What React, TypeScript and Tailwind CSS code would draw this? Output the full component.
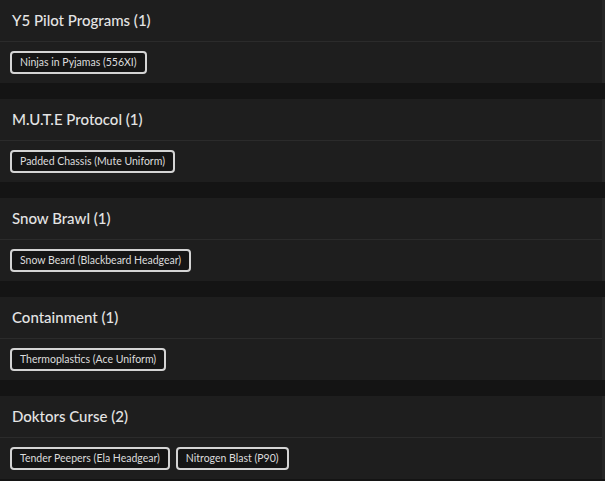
import React from "react";

const groups: { title: string; items: string[] }[] = [
  { title: "Y5 Pilot Programs (1)", items: ["Ninjas in Pyjamas (556XI)"] },
  { title: "M.U.T.E Protocol (1)", items: ["Padded Chassis (Mute Uniform)"] },
  { title: "Snow Brawl (1)", items: ["Snow Beard (Blackbeard Headgear)"] },
  { title: "Containment (1)", items: ["Thermoplastics (Ace Uniform)"] },
  { title: "Doktors Curse (2)", items: ["Tender Peepers (Ela Headgear)", "Nitrogen Blast (P90)"] },
];

export default function App() {
  return (
    <div
      className="w-[605px] h-[481px] overflow-hidden bg-[#141414] flex flex-col gap-4"
      style={{ fontFamily: "Lato, 'Open Sans', sans-serif" }}
    >
      {groups.map((g) => (
        <div key={g.title} className="bg-[#1e1e1e] border-r-[3px] border-[#262626] flex flex-col shrink-0">
          <div className="h-[42px] px-3 flex items-center border-b border-[#2b2b2b] text-[#e4e4e4] text-[15px] font-medium">
            {g.title}
          </div>
          <div className="h-[41px] px-[10px] flex items-center gap-[6px]">
            {g.items.map((it) => (
              <span
                key={it}
                className="h-[23px] px-[8px] flex items-center rounded-[4px] border-2 border-[#d4d4d4] bg-[#151515] text-[#dcdcdc] text-[10.5px]"
              >
                {it}
              </span>
            ))}
          </div>
        </div>
      ))}
    </div>
  );
}
